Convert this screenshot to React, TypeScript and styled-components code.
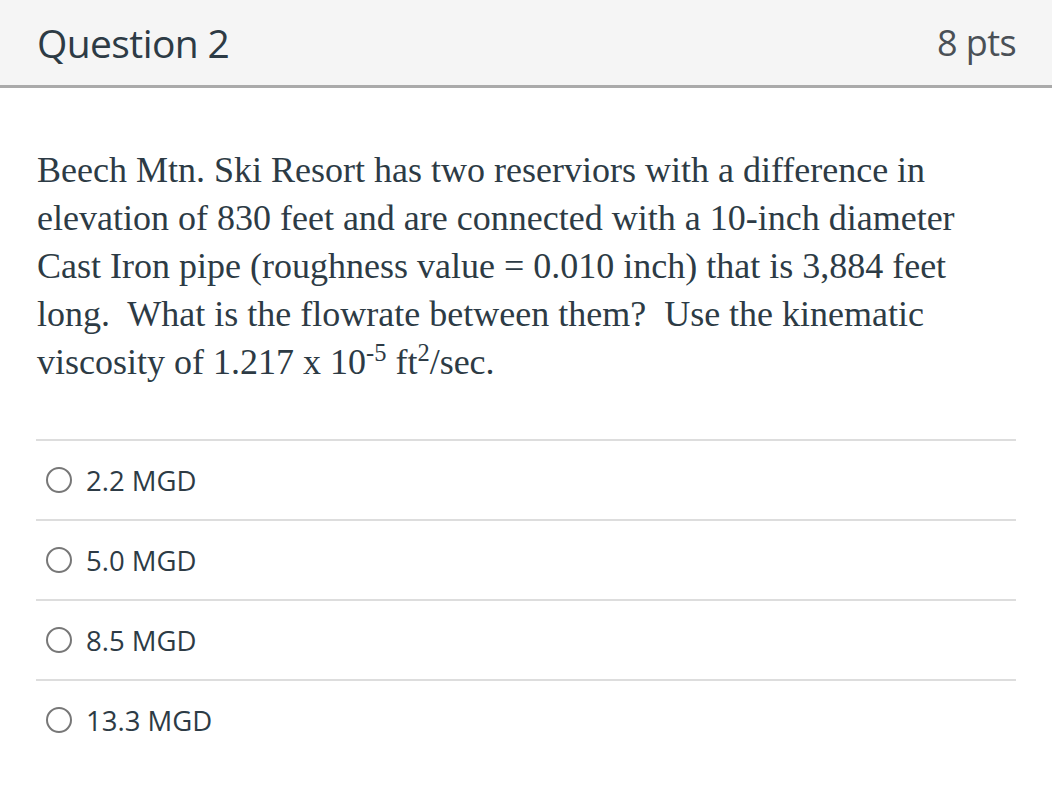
import React, { FC } from "react";
import styled, { createGlobalStyle } from "styled-components";

const GlobalStyle = createGlobalStyle`
  html, body {
    margin: 0;
    padding: 0;
    background: #ffffff;
  }
`;

const answers = ["2.2 MGD", "5.0 MGD", "8.5 MGD", "13.3 MGD"];

const App: FC = () => {
  return (
    <>
      <GlobalStyle />
      <QuestionCard>
        <Header>
          <Title>Question 2</Title>
          <Points>8 pts</Points>
        </Header>
        <Body>
          <QuestionText>
            Beech Mtn. Ski Resort has two reserviors with a difference in
            elevation of 830 feet and are connected with a 10-inch diameter
            Cast Iron pipe (roughness value = 0.010 inch) that is 3,884 feet
            long.&nbsp; What is the flowrate between them?&nbsp; Use the
            kinematic viscosity of 1.217 x 10<Sup>-5</Sup> ft<Sup>2</Sup>/sec.
          </QuestionText>
          <AnswerList>
            {answers.map((a) => (
              <AnswerRow key={a}>
                <Radio />
                <AnswerLabel>{a}</AnswerLabel>
              </AnswerRow>
            ))}
          </AnswerList>
        </Body>
      </QuestionCard>
    </>
  );
};

export default App;

const QuestionCard = styled.div`
  width: 1052px;
  min-height: 792px;
  background: #ffffff;
`;

const Header = styled.div`
  display: flex;
  align-items: center;
  justify-content: space-between;
  height: 85px;
  padding: 0 36px 0 37px;
  background: #f5f5f5;
  border-bottom: 3px solid #aaaaaa;
  box-sizing: content-box;
`;

const Title = styled.h2`
  margin: 0;
  font-family: "Open Sans", sans-serif;
  font-weight: 500;
  font-size: 39px;
  color: #2d3b45;
  letter-spacing: -0.6px;
`;

const Points = styled.div`
  font-family: "Open Sans", sans-serif;
  font-weight: 500;
  font-size: 36px;
  color: #4a5056;
  letter-spacing: -0.6px;
`;

const Body = styled.div`
  padding: 58px 36px 0 36px;
`;

const QuestionText = styled.p`
  margin: 0 0 53px 1px;
  font-family: "Liberation Serif", "Times New Roman", serif;
  font-size: 36px;
  line-height: 48px;
  color: #2d3b45;
`;

const Sup = styled.sup`
  font-size: 0.68em;
  line-height: 0;
  vertical-align: 0.55em;
`;

const AnswerList = styled.div`
  display: flex;
  flex-direction: column;
`;

const AnswerRow = styled.div`
  display: flex;
  align-items: center;
  gap: 14px;
  height: 78px;
  padding-left: 10px;
  border-top: 2px solid #dddddd;
`;

const Radio = styled.span`
  width: 22px;
  height: 22px;
  border: 2px solid #777777;
  border-radius: 50%;
  flex-shrink: 0;
`;

const AnswerLabel = styled.span`
  font-family: "Open Sans", sans-serif;
  font-size: 27.5px;
  color: #2d3b45;
`;
